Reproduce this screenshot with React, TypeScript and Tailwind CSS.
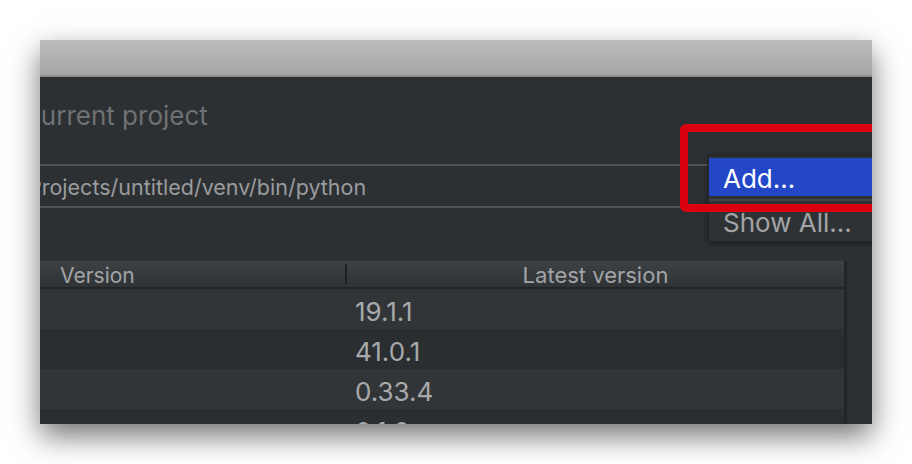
import React from "react";

const rows = ["19.1.1", "41.0.1", "0.33.4", "0.1.0"];

const App: React.FC = () => {
  return (
    <div
      className="w-[912px] h-[464px] bg-white pt-[40px] pl-[40px] overflow-hidden"
      style={{ fontFamily: "Inter, 'Noto Sans', sans-serif" }}
    >
      {/* Window */}
      <div className="relative w-[832px] h-[384px] overflow-hidden bg-[#2d3033] shadow-[0_12px_28px_rgba(0,0,0,0.55)]">
        {/* Title bar */}
        <div className="h-[37px] bg-gradient-to-b from-[#bcbcbd] to-[#a5a5a6] border-b-2 border-[#8c8c8d]" />

        {/* Project label */}
        <div className="h-[76px] flex items-center pt-[1px]">
          <span className="-ml-[14px] text-[26px] text-[#6f7173] whitespace-nowrap">current project</span>
        </div>

        {/* Interpreter field */}
        <div className="mt-[11px] h-[44px] w-[700px] border-y-2 border-[#505356] flex items-center pt-[2px]">
          <span className="-ml-[12px] text-[21.5px] text-[#9a9c9e] whitespace-nowrap">
            Projects/untitled/venv/bin/python
          </span>
        </div>

        {/* Packages table */}
        <div className="mt-[53px] w-[807px] border-r-[3px] border-[#222427]">
          <div className="h-[28px] flex bg-gradient-to-b from-[#3e4144] to-[#303336] border-b-2 border-[#222427]">
            <div className="w-[307px] flex items-center pl-[20px] pt-[3px] text-[21px] text-[#a2a4a6] border-r-2 border-[#1e2022] my-[3px]">
              Version
            </div>
            <div className="flex-1 flex items-center justify-center pt-[3px] text-[22px] text-[#a2a4a6]">
              Latest version
            </div>
          </div>
          {rows.map((v, i) => (
            <div
              key={v}
              className={`h-[40px] flex items-center pt-[4px] ${i % 2 === 0 ? "bg-[#323538]" : "bg-[#2b2e31]"}`}
            >
              <span className="ml-[315px] text-[26px] text-[#a7a9ab]">{v}</span>
            </div>
          ))}
        </div>

        {/* Popup menu */}
        <div className="absolute left-[668px] top-[115px] w-[180px] h-[87px] bg-[#2f3235] border border-[#222427] pt-[2px] shadow-[0_2px_6px_rgba(0,0,0,0.4)]">
          <div className="h-[38px] bg-[#2447c8] flex items-center pl-[14px] pt-[2px] text-[26px] text-white">
            Add...
          </div>
          <div className="mt-[3px] h-[2px] bg-[#45484b]" />
          <div className="h-[40px] flex items-center pl-[14px] pt-[2px] text-[26px] text-[#a2a4a6]">
            Show All...
          </div>
        </div>

        {/* Highlight box */}
        <div className="absolute left-[640px] top-[84px] w-[200px] h-[88px] border-[8px] border-[#db0010] rounded-[6px]" />
      </div>
    </div>
  );
};

export default App;
